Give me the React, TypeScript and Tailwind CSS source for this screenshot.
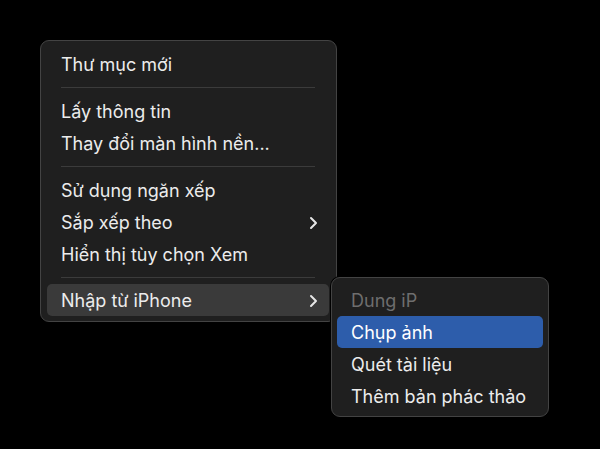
import React from "react";

const font = { fontFamily: "Inter, 'Noto Sans', sans-serif" };

function Chevron() {
  return (
    <svg width="9" height="14" viewBox="0 0 9 14" className="text-[#e6e6e6]">
      <path d="M2 2 L7 7 L2 12" fill="none" stroke="currentColor" strokeWidth="2" strokeLinecap="round" strokeLinejoin="round" />
    </svg>
  );
}

function Item({ label, chevron, active }: { label: string; chevron?: boolean; active?: boolean }) {
  return (
    <div
      className={
        "flex h-8 items-center justify-between rounded-[5px] pl-[14px] pr-[11px] pt-px text-[18px] text-[#ececec] " +
        (active ? "bg-[#3a3a3a]" : "")
      }
    >
      <span>{label}</span>
      {chevron && <Chevron />}
    </div>
  );
}

function Sep() {
  return (
    <div className="flex h-[15px] items-center px-[14px]">
      <div className="h-px w-full bg-[#3b3b3b]" />
    </div>
  );
}

export default function App() {
  return (
    <div className="h-[449px] w-[600px] bg-black pl-10 pt-10" style={font}>
      <div className="relative w-[297px]">
        <div className="rounded-[9px] border border-[#434343] bg-[#1f1f1f] pb-[5px] pl-[6px] pr-[7px] pt-[7px] shadow-[0_0_0_1px_#000]">
          <Item label="Thư mục mới" />
          <Sep />
          <Item label="Lấy thông tin" />
          <Item label="Thay đổi màn hình nền..." />
          <Sep />
          <Item label="Sử dụng ngăn xếp" />
          <Item label="Sắp xếp theo" chevron />
          <Item label="Hiển thị tùy chọn Xem" />
          <div className="flex h-[14px] items-center px-[14px]">
            <div className="h-px w-full bg-[#3b3b3b]" />
          </div>
          <Item label="Nhập từ iPhone" chevron active />
        </div>

        <div className="absolute left-[291px] top-[237px] w-[218px] rounded-[9px] border border-[#434343] bg-[#1f1f1f] pb-[4px] pl-[5px] pr-[5px] pt-[6px] text-[18px] shadow-[0_0_0_1px_#000]">
          <div className="flex h-8 items-center pl-[14px] pt-px text-[#6e6e6e]">Dung iP</div>
          <div className="flex h-8 items-center rounded-[5px] bg-[#2d5dab] pl-[14px] pt-px text-white">Chụp ảnh</div>
          <div className="flex h-8 items-center pl-[14px] pt-px text-[#ececec]">Quét tài liệu</div>
          <div className="flex h-8 items-center pl-[14px] pt-px text-[#ececec]">Thêm bản phác thảo</div>
        </div>
      </div>
    </div>
  );
}
